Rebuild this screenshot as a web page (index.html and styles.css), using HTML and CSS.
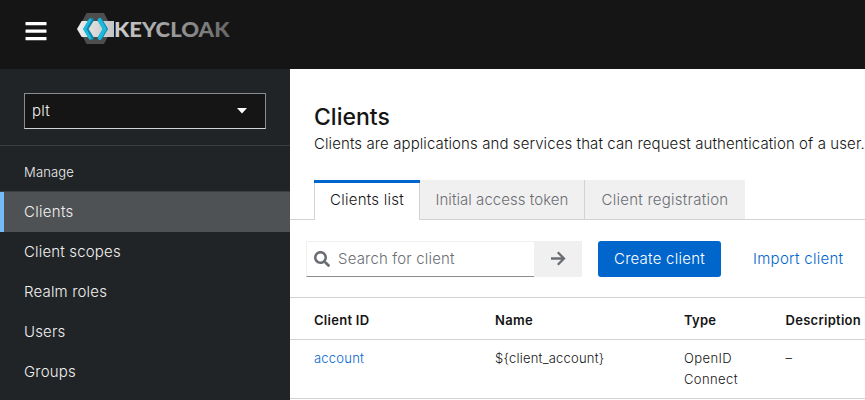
FILE: index.html
```html
<!DOCTYPE html>
<html lang="en">
<head>
<meta charset="utf-8">
<title>Clients</title>
<link rel="stylesheet" href="styles.css">
</head>
<body>
<header class="masthead">
  <svg class="menu" viewBox="0 0 22 20" width="22" height="20" fill="#fff"><rect x="0.5" y="1" width="21" height="3.2" rx=".5"/><rect x="0.5" y="8.5" width="21" height="3.2" rx=".5"/><rect x="0.5" y="16" width="21" height="3.2" rx=".5"/></svg>
  <svg class="logo" viewBox="0 0 160 34" width="160" height="34">
    <defs>
      <linearGradient id="word" gradientUnits="userSpaceOnUse" x1="38" y1="0" x2="153" y2="0"><stop offset="0" stop-color="#cfcfcf"/><stop offset=".45" stop-color="#a0a0a0"/><stop offset="1" stop-color="#666"/></linearGradient>
      <linearGradient id="band" x1="0" y1="0" x2="1" y2="0"><stop offset="0" stop-color="#eee"/><stop offset="1" stop-color="#c4c4c4"/></linearGradient>
    </defs>
    <path d="M9.500 1H27l8 15.500L27 32H9.500L1.500 16.500z" fill="#4d4d4d"/>
    <path d="M4.700 9H37v16H4.700L0 17z" fill="url(#band)"/>
    <path d="M14.500 8L9 17l5.500 9" fill="none" stroke="#1285a6" stroke-width="4.400" stroke-linecap="round"/>
    <path d="M13 8L7.700 17l5.300 9" fill="none" stroke="#1ab9df" stroke-width="3" stroke-linecap="round"/>
    <path d="M23 8l5.500 9-5.500 9" fill="none" stroke="#1285a6" stroke-width="4.400" stroke-linecap="round"/>
    <path d="M22.500 8l5.200 9-5.200 9" fill="none" stroke="#1ab9df" stroke-width="3.600" stroke-linecap="round"/>
    <text class="wordmark" x="37" y="24.600" textLength="115.500" lengthAdjust="spacingAndGlyphs" fill="url(#word)">KEYCLOAK</text>
  </svg>
</header>
<div class="page">
  <nav class="sidebar">
    <div class="realm"><button class="realm-select"><span>plt</span><svg width="10" height="6" viewBox="0 0 10 6"><path d="M0 0h10L5 5.500z" fill="#fff"/></svg></button></div>
    <h2 class="nav-title">Manage</h2>
    <a class="nav-item current">Clients</a>
    <a class="nav-item">Client scopes</a>
    <a class="nav-item">Realm roles</a>
    <a class="nav-item">Users</a>
    <a class="nav-item">Groups</a>
  </nav>
  <main class="content">
    <h1 class="title">Clients</h1>
    <p class="description">Clients are applications and services that can request authentication of a user.</p>
    <div class="tabs">
      <button class="tab active">Clients list</button>
      <button class="tab second">Initial access token</button>
      <button class="tab third">Client registration</button>
    </div>
    <div class="toolbar">
      <div class="search"><svg width="16" height="16" viewBox="0 0 512 512"><path fill="#6a6e73" d="M505 442.700L405.300 343c-4.500-4.500-10.600-7-17-7H372c27.600-35.300 44-79.700 44-128C416 93.100 322.900 0 208 0S0 93.100 0 208s93.100 208 208 208c48.300 0 92.700-16.400 128-44v16.300c0 6.400 2.500 12.500 7 17l99.700 99.700c9.400 9.400 24.600 9.400 33.900 0l28.300-28.300c9.400-9.400 9.400-24.600.1-34zM208 336c-70.700 0-128-57.200-128-128 0-70.700 57.200-128 128-128 70.700 0 128 57.200 128 128 0 70.700-57.200 128-128 128z"/></svg><span>Search for client</span></div>
      <button class="go"><svg width="16" height="16" viewBox="0 0 16 16" fill="none" stroke="#6a6e73" stroke-width="2.300"><path d="M1 7.500h12.500M7.800 1.300L14 7.500l-6.200 6.200"/></svg></button>
      <button class="create">Create client</button>
      <a class="import">Import client</a>
    </div>
    <div class="table">
      <div class="row head"><span>Client ID</span><span>Name</span><span>Type</span><span>Description</span></div>
      <div class="row"><a class="link">account</a><span>${client_account}</span><span class="type">OpenID<br>Connect</span><span>–</span></div>
    </div>
  </main>
</div>
</body>
</html>
```
FILE: styles.css
```css
* { box-sizing: border-box; }
body { margin: 0; height: 400px; overflow: hidden; background: #fff; color: #151515; font: 350 15px/24px Inter, "Liberation Sans", sans-serif; letter-spacing: .17px; }
button { font: inherit; border: 0; margin: 0; padding: 0; letter-spacing: inherit; }
h1, h2, p { margin: 0; }
.masthead { height: 69px; background: #151515; display: flex; align-items: flex-start; padding: 12px 0 0 25px; }
.menu { margin-top: 9px; }
.logo { margin-left: 30px; }
.wordmark { font: 900 21.500px Lato, sans-serif; letter-spacing: 0; }
.page { display: flex; height: 331px; }
.sidebar { width: 290px; flex: none; background: #212427; color: #f0f0f0; overflow: hidden; }
.realm { height: 77px; padding: 24px 24px 0; border-bottom: 1px solid #3c3f42; }
.realm-select { display: flex; align-items: center; justify-content: space-between; width: 242px; height: 36px; padding: 0 18px 0 7px; color: #f0f0f0; background: #151515; border: 1px solid #8a8d90; border-bottom-color: #d2d2d2; }
.nav-title { height: 45px; padding: 14px 24px 0; font-size: 13px; line-height: 24px; font-weight: 350; }
.nav-item { display: block; height: 40px; padding: 8px 24px; }
.nav-item.current { height: 41px; background: #4f5255; border-top: 1px solid #3c3f42; box-shadow: inset 4px 0 #73bcf7; letter-spacing: .3px; }
.content { flex: 1; min-width: 0; overflow: hidden; }
.title { padding: 33px 0 0 24px; font-size: 23px; line-height: 30px; font-weight: 500; letter-spacing: 0; }
.description { padding-left: 24px; white-space: nowrap; letter-spacing: .095px; }
.tabs { display: flex; margin-top: 24px; padding-left: 24px; height: 40px; box-shadow: inset 0 -1px #d2d2d2; }
.tab { height: 39px; background: #f0f0f0; color: #6a6e73; white-space: nowrap; }
.tab.active { width: 106px; height: 40px; background: #fff; color: #151515; box-shadow: inset 0 3px #06c, inset 1px 0 #d2d2d2, inset -1px 0 #d2d2d2; letter-spacing: .25px; }
.second { width: 165px; border-right: 1px solid #d2d2d2; letter-spacing: .05px; }
.third { width: 160px; letter-spacing: .25px; }
.toolbar { display: flex; height: 77px; padding: 21px 0 0 16px; white-space: nowrap; }
.search { width: 228px; height: 36px; display: flex; align-items: center; gap: 8px; padding-left: 7px; border: 1px solid #f0f0f0; border-right: 0; border-bottom-color: #8a8d90; color: #6a6e73; }
.go { width: 48px; height: 36px; background: #f0f0f0; display: flex; align-items: center; justify-content: center; }
.create { width: 123px; height: 36px; margin-left: 16px; border-radius: 3px; background: #06c; color: #fff; letter-spacing: .25px; }
.import { padding: 6px 0 0 32px; color: #06c; letter-spacing: .28px; }
.table { border-top: 1px solid #d2d2d2; font-size: 13px; line-height: 21px; letter-spacing: .22px; }
.row { display: grid; grid-template-columns: 181px 189px 101.500px 100px; height: 59px; padding: 8px 0 0 24px; border-bottom: 1px solid #d2d2d2; }
.head { height: 42px; padding-top: 12px; font-weight: 600; letter-spacing: .28px; }
.link { color: #06c; }
.type { letter-spacing: .4px; }
```
